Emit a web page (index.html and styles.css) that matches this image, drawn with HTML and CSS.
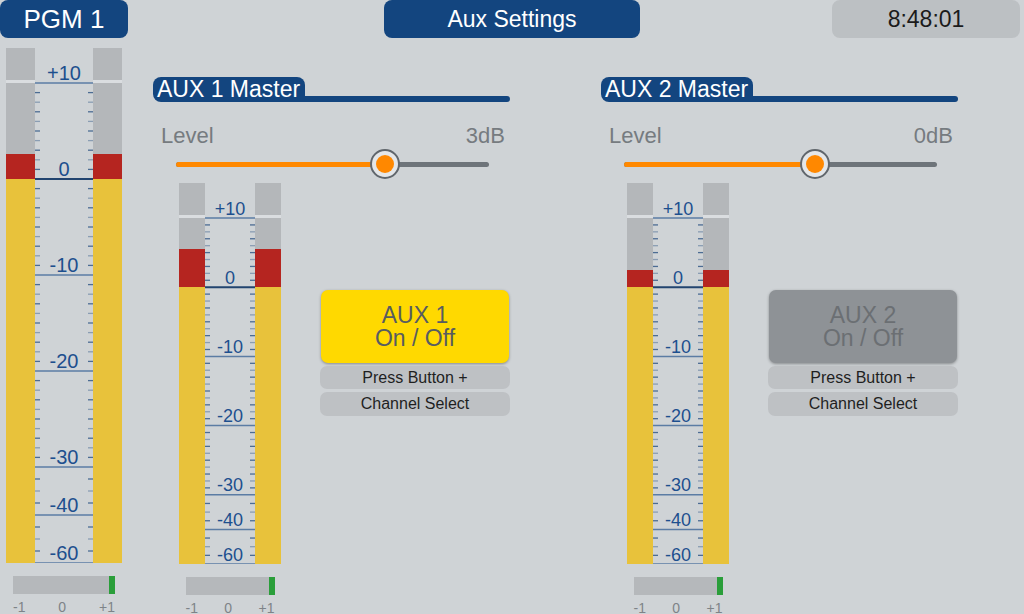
FILE: index.html
```html
<!DOCTYPE html>
<html lang="en">
<head>
    <meta charset="UTF-8">
    <meta name="viewport" content="width=device-width, initial-scale=1.0">
    <title>Aux Settings</title>
    <link rel="stylesheet" href="styles.css">
</head>
<body>
    <div class="topbar">
        <div class="pgm-tab">PGM 1</div>
        <div class="page-title">Aux Settings</div>
        <div class="clock">8:48:01</div>
    </div>

    <div class="content">
        <div class="meter-col pgm">
            <div class="meter" data-height="480" data-level="2.6" data-bar="29" data-scale="58" data-fs="20"></div>
            <div class="balance"><div class="balance-mark"></div></div>
            <div class="balance-labels"><span>-1</span><span>0</span><span>+1</span></div>
        </div>

        <div class="aux">
            <div class="aux-head">
                <div class="aux-name">AUX 1 Master</div>
                <div class="aux-line"></div>
            </div>
            <div class="level-row">
                <span>Level</span>
                <span>3dB</span>
            </div>
            <div class="slider">
                <div class="track"><div class="track-fill" style="width: 66.8%"></div></div>
                <div class="knob" style="left: 66.8%"><div class="knob-dot"></div></div>
            </div>
            <div class="aux-body">
                <div class="meter-col">
                    <div class="meter" data-height="346" data-level="5.5" data-bar="26" data-scale="50" data-fs="18"></div>
                    <div class="balance"><div class="balance-mark"></div></div>
                    <div class="balance-labels"><span>-1</span><span>0</span><span>+1</span></div>
                </div>
                <div class="aux-buttons">
                    <div class="onoff on"><span>AUX 1</span><span>On / Off</span></div>
                    <div class="hint">Press Button +</div>
                    <div class="hint last">Channel Select</div>
                </div>
            </div>
        </div>

        <div class="aux">
            <div class="aux-head">
                <div class="aux-name">AUX 2 Master</div>
                <div class="aux-line"></div>
            </div>
            <div class="level-row">
                <span>Level</span>
                <span>0dB</span>
            </div>
            <div class="slider">
                <div class="track"><div class="track-fill" style="width: 61%"></div></div>
                <div class="knob" style="left: 61%"><div class="knob-dot"></div></div>
            </div>
            <div class="aux-body">
                <div class="meter-col">
                    <div class="meter" data-height="346" data-level="2.5" data-bar="26" data-scale="50" data-fs="18"></div>
                    <div class="balance"><div class="balance-mark"></div></div>
                    <div class="balance-labels"><span>-1</span><span>0</span><span>+1</span></div>
                </div>
                <div class="aux-buttons">
                    <div class="onoff off"><span>AUX 2</span><span>On / Off</span></div>
                    <div class="hint">Press Button +</div>
                    <div class="hint last">Channel Select</div>
                </div>
            </div>
        </div>
    </div>

    <script>
        const svgNS = 'http://www.w3.org/2000/svg';
        // dB mark, position in units (10 units per meter)
        const marks = [[10, 0], [0, 2], [-10, 4], [-20, 6], [-30, 8], [-40, 9], [-60, 10]];
        const capHeight = 35;

        function addLine(svg, x1, y1, x2, y2, cls) {
            const l = document.createElementNS(svgNS, 'line');
            l.setAttribute('x1', x1);
            l.setAttribute('y1', y1);
            l.setAttribute('x2', x2);
            l.setAttribute('y2', y2);
            l.setAttribute('class', cls);
            svg.appendChild(l);
        }

        function buildScale(w, h, fontSize) {
            const svg = document.createElementNS(svgNS, 'svg');
            const unit = h / 10;
            svg.setAttribute('class', 'scale');
            svg.setAttribute('width', w);
            svg.setAttribute('height', capHeight + h);

            for (let i = 0; i < marks.length - 1; i++) {
                const y1 = capHeight + marks[i][1] * unit;
                const y2 = capHeight + marks[i + 1][1] * unit;
                const count = marks[i + 1][1] - marks[i][1] > 1 ? 9 : 3;
                const step = (y2 - y1) / (count + 1);
                for (let t = 1; t <= count; t++) {
                    const y = y1 + step * t;
                    const cls = t % 2 ? 'tick' : 'tick light';
                    addLine(svg, 0, y, 5, y, cls);
                    addLine(svg, w - 5, y, w, y, cls);
                }
            }

            marks.forEach(([db, pos]) => {
                const y = capHeight + pos * unit;
                addLine(svg, 0, y, w, y, db === 0 ? 'major zero' : 'major');
                const label = document.createElementNS(svgNS, 'text');
                label.setAttribute('x', w / 2);
                label.setAttribute('y', y - 3.5);
                label.setAttribute('font-size', fontSize);
                label.textContent = db > 0 ? '+' + db : db;
                svg.appendChild(label);
            });
            return svg;
        }

        function buildBar(w, h, level) {
            const unit = h / 10;
            const bar = document.createElement('div');
            bar.className = 'bar';
            bar.style.width = w + 'px';
            bar.innerHTML = `
                <div class="cap"></div>
                <div class="cap-gap"></div>
                <div class="bar-main" style="height: ${h}px">
                    <div class="bar-empty"></div>
                    <div class="bar-red" style="height: ${level * unit / 5}px"></div>
                    <div class="bar-yellow" style="height: ${h - 2 * unit}px"></div>
                </div>`;
            return bar;
        }

        document.querySelectorAll('.meter').forEach(meter => {
            const h = +meter.dataset.height;
            const level = +meter.dataset.level;
            const barW = +meter.dataset.bar;
            meter.appendChild(buildBar(barW, h, level));
            meter.appendChild(buildScale(+meter.dataset.scale, h, meter.dataset.fs));
            meter.appendChild(buildBar(barW, h, level));
        });
    </script>
</body>
</html>
```

FILE: styles.css
```css
body {
    margin: 0;
    width: 1024px;
    height: 614px;
    overflow: hidden;
    background-color: #cfd3d6;
    font-family: "Liberation Sans", Arial, sans-serif;
    color: #333;
}

.topbar {
    display: flex;
    height: 38px;
}

.pgm-tab,
.page-title {
    background: #13457f;
    color: #fff;
    text-align: center;
    line-height: 38px;
    border-radius: 8px;
}

.pgm-tab {
    width: 128px;
    font-size: 26px;
}

.page-title {
    width: 256px;
    margin-left: 256px;
    font-size: 23px;
}

.clock {
    width: 188px;
    margin-left: 192px;
    background: #bcc0c3;
    color: #1b1b1b;
    font-size: 23px;
    line-height: 38px;
    text-align: center;
    border-radius: 8px;
}

.content {
    display: flex;
    padding: 10px 0 0 6px;
}

/* meters */
.meter-col {
    display: flex;
    flex-direction: column;
    align-items: center;
}

.meter {
    display: flex;
}

.bar {
    display: flex;
    flex-direction: column;
}

.cap {
    height: 32px;
    background: #b4b7ba;
}

.cap-gap {
    height: 3px;
    background: #dadde0;
}

.bar-main {
    display: flex;
    flex-direction: column;
}

.bar-empty {
    flex: 1;
    background: #b4b7ba;
}

.bar-red {
    background: #b52520;
}

.bar-yellow {
    background: #e8c23b;
}

.scale text {
    font-family: "Liberation Sans", Arial, sans-serif;
    fill: #1d4f8e;
    text-anchor: middle;
}

.scale .tick {
    stroke: #4c6c93;
    stroke-width: 1.3;
}

.scale .tick.light {
    stroke: #8a9db3;
}

.scale .major {
    stroke: #5b7ca4;
    stroke-width: 1.5;
}

.scale .major.zero {
    stroke: #22446f;
    stroke-width: 2;
}

.balance {
    display: flex;
    justify-content: flex-end;
    width: 89px;
    height: 18px;
    margin-top: 13px;
    background: #b5b8bb;
}

.balance-mark {
    width: 6px;
    background: #2a9e3a;
}

.balance-labels {
    display: flex;
    justify-content: space-between;
    width: 89px;
    margin-top: 5px;
    font-size: 14px;
    line-height: 16px;
    color: #7e8388;
}

.pgm .balance,
.pgm .balance-labels {
    width: 102px;
}

/* aux sections */
.aux {
    width: 357px;
    margin-left: 31px;
    padding-top: 29px;
}

.aux + .aux {
    margin-left: 91px;
}

.aux-head {
    display: flex;
    align-items: flex-end;
    height: 25px;
}

.aux-name {
    background: #13457f;
    color: #fff;
    font-size: 23px;
    line-height: 25px;
    padding: 0 5px 0 4px;
    border-radius: 8px 8px 0 8px;
}

.aux-line {
    flex: 1;
    height: 6px;
    background: #13457f;
    border-radius: 0 3px 3px 0;
}

.level-row {
    display: flex;
    justify-content: space-between;
    margin-top: 21px;
    padding: 0 5px 0 8px;
    font-size: 22px;
    line-height: 26px;
    color: #767b80;
}

.slider {
    position: relative;
    display: flex;
    align-items: center;
    height: 30px;
    margin: 0 21px 0 23px;
}

.track {
    flex: 1;
    height: 5px;
    background: #6e747a;
    border-radius: 3px;
    overflow: hidden;
}

.track-fill {
    height: 100%;
    background: #ff8800;
}

.knob {
    position: absolute;
    top: 0;
    width: 30px;
    height: 30px;
    margin-left: -15px;
    box-sizing: border-box;
    border: 2px solid #60666c;
    border-radius: 50%;
    background: #e4e6e8;
    display: flex;
    align-items: center;
    justify-content: center;
}

.knob-dot {
    width: 18px;
    height: 18px;
    border-radius: 50%;
    background: #ff8800;
}

.aux-body {
    display: flex;
    margin-top: 4px;
    padding-left: 26px;
}

.aux-buttons {
    width: 192px;
    margin: 107px 0 0 39px;
}

.onoff {
    display: flex;
    flex-direction: column;
    justify-content: center;
    height: 73px;
    margin: 0 1px;
    border-radius: 7px;
    font-size: 23px;
    line-height: 23px;
    text-align: center;
    box-shadow: 0 1px 3px rgba(0, 0, 0, 0.35);
}

.onoff.on {
    background: #ffd900;
    color: #585c60;
}

.onoff.off {
    background: #8e9296;
    color: #6b6f73;
}

.hint {
    height: 23px;
    margin-top: 3px;
    border-radius: 7px;
    background: #bec1c4;
    color: #1f1f1f;
    font-size: 16px;
    line-height: 23px;
    text-align: center;
}

.hint.last {
    height: 24px;
    line-height: 24px;
}
```
